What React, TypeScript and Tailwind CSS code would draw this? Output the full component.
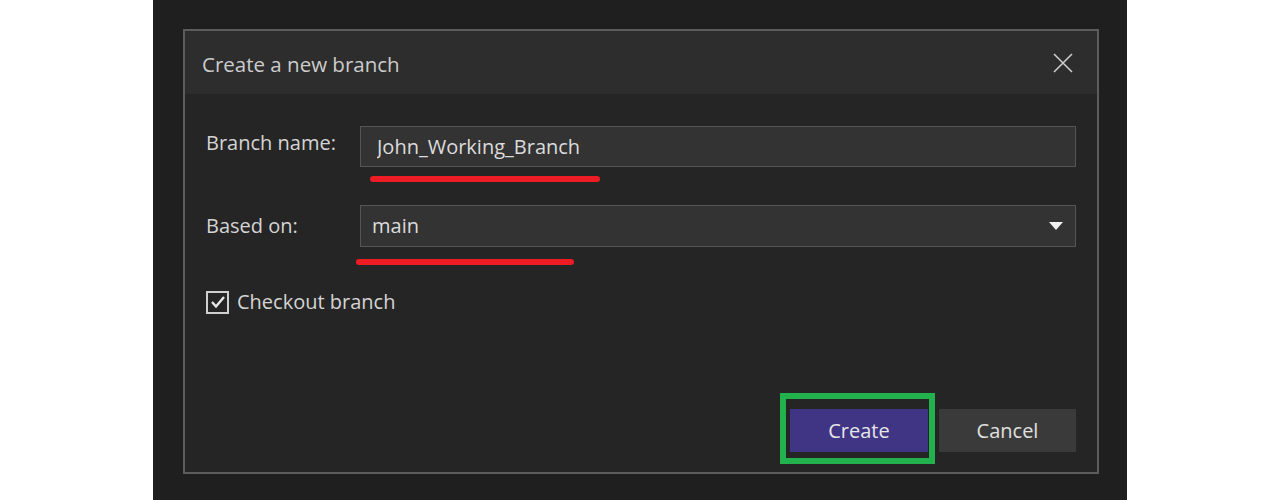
import { useState } from "react";

const font = { fontFamily: '"Open Sans", "Noto Sans", sans-serif' };

export default function App() {
  const [name, setName] = useState("John_Working_Branch");
  const [checkout, setCheckout] = useState(true);

  return (
    <div className="w-[1280px] h-[500px] bg-white flex" style={font}>
      <div className="ml-[153px] w-[974px] h-full bg-[#1f1f1f] pt-[29px] pl-[30px]">
        {/* Dialog */}
        <div className="w-[916px] h-[445px] border-2 border-[#5c5c5c] bg-[#252525] flex flex-col">
          <div className="h-[63px] bg-[#2d2d2d] flex items-center justify-between pl-[17px] pr-[24px]">
            <span className="text-[20.5px] text-[#cccccc] pt-[3px]">Create a new branch</span>
            <svg width="20" height="20" viewBox="0 0 20 20" className="text-[#cccccc]">
              <path d="M1 1 L19 19 M19 1 L1 19" stroke="currentColor" strokeWidth="1.6" />
            </svg>
          </div>

          <div className="flex flex-col pl-[21px] pr-[21px] pt-[32px]">
            {/* Branch name */}
            <div className="flex items-start">
              <label className="w-[154px] text-[20px] text-[#d4d4d4] leading-[41px] -mt-[4px]">Branch name:</label>
              <div className="flex-1 flex flex-col">
                <input
                  value={name}
                  onChange={(e) => setName(e.target.value)}
                  className="h-[41px] bg-[#333333] border border-[#555555] text-[20px] text-[#dcdcdc] pl-[16px] outline-none"
                  style={font}
                />
                <div className="ml-[10px] mt-[9px] w-[230px] h-[6px] rounded-full bg-[#ed1c24]" />
              </div>
            </div>

            {/* Based on */}
            <div className="flex items-start mt-[23px]">
              <label className="w-[154px] text-[20px] text-[#d4d4d4] leading-[42px]">Based on:</label>
              <div className="flex-1 flex flex-col">
                <div className="h-[42px] bg-[#333333] border border-[#555555] flex items-center justify-between pl-[11px] pr-[12px]">
                  <span className="text-[20px] text-[#dcdcdc]">main</span>
                  <svg width="14" height="8" viewBox="0 0 14 8">
                    <path d="M0 0 L14 0 L7 8 Z" fill="#f0f0f0" />
                  </svg>
                </div>
                <div className="-ml-[4px] mt-[12px] w-[218px] h-[6px] rounded-full bg-[#ed1c24]" />
              </div>
            </div>

            {/* Checkout */}
            <label className="flex items-center gap-[8px] mt-[22px] cursor-pointer" onClick={() => setCheckout(!checkout)}>
              <span className="w-[23px] h-[23px] border-2 border-[#d0d0d0] flex items-center justify-center">
                {checkout && (
                  <svg width="16" height="14" viewBox="0 0 16 14">
                    <path d="M2 7 L6 11.5 L14 2" stroke="#e8e8e8" strokeWidth="2.4" fill="none" />
                  </svg>
                )}
              </span>
              <span className="text-[20px] text-[#d4d4d4]">Checkout branch</span>
            </label>
          </div>

          {/* Buttons */}
          <div className="mt-auto flex justify-end items-center pr-[21px] pb-[20px] gap-[11px]">
            <div className="relative">
              <button className="w-[138px] h-[43px] bg-[#3f3584] text-[20px] text-[#e6e6e6]" style={font}>Create</button>
              {/* highlight annotation */}
              <div className="absolute -left-[10px] -right-[7px] -top-[16px] -bottom-[12px] border-[6px] border-[#22b14c] pointer-events-none" />
            </div>
            <button className="w-[137px] h-[43px] bg-[#3a3a3a] text-[20px] text-[#e0e0e0]" style={font}>Cancel</button>
          </div>
        </div>
      </div>
    </div>
  );
}
